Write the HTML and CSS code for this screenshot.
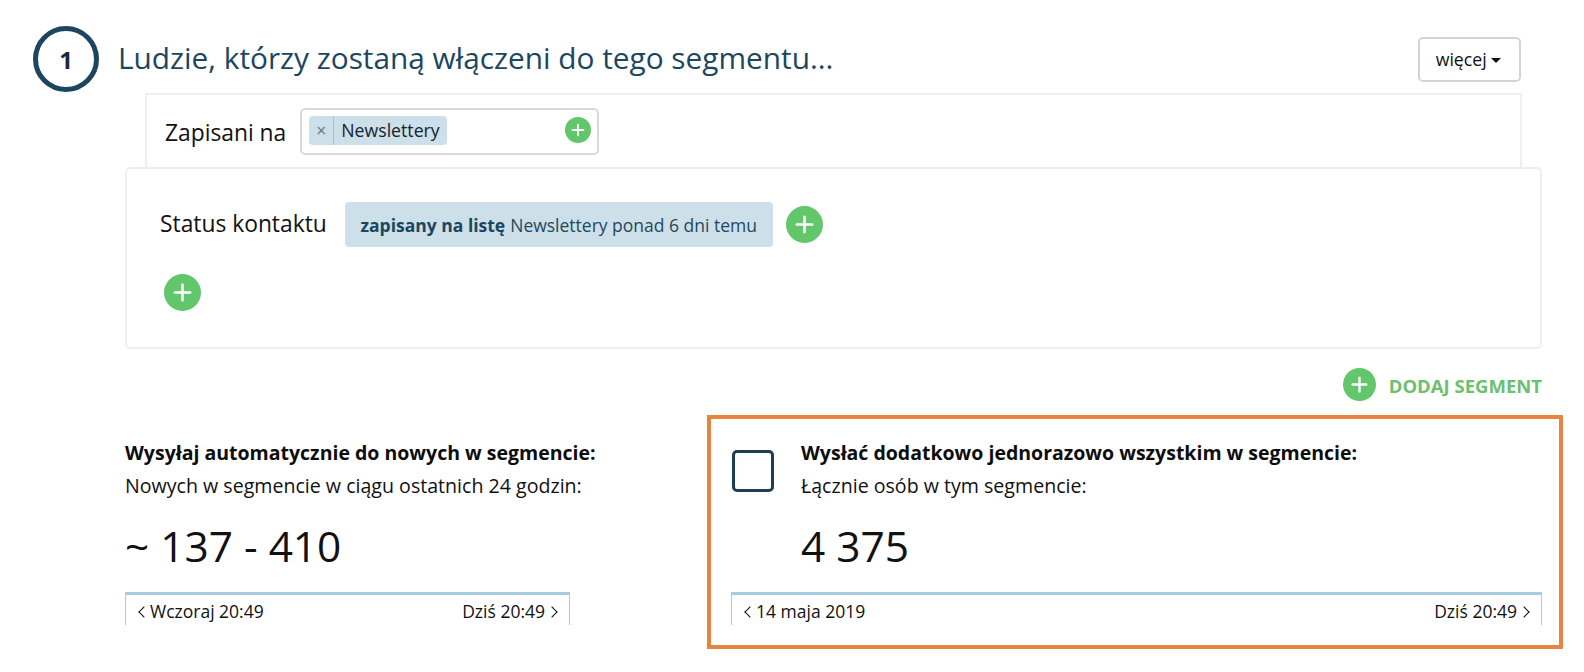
FILE: index.html
```html
<!DOCTYPE html>
<html lang="pl">
<head>
<meta charset="utf-8">
<title>Segment</title>
<link rel="stylesheet" href="styles.css">
</head>
<body>
<svg class="defs" width="0" height="0" aria-hidden="true"><symbol id="plus" viewBox="0 0 24 24"><circle cx="12" cy="12" r="12" fill="#62c66a"/><path d="M12 7v10M7 12h10" stroke="#fff" stroke-width="1.7" stroke-linecap="round"/></symbol></svg>
<main class="page">
  <header class="head">
    <div class="step">1</div>
    <h1 class="title">Ludzie, którzy zostaną włączeni do tego segmentu...</h1>
    <button class="more">więcej <span class="caret"></span></button>
  </header>
  <section class="subscribed">
    <span class="label">Zapisani na</span>
    <div class="tagbox">
      <span class="tag"><span class="tag-x">×</span><span class="tag-name">Newslettery</span></span>
      <svg class="plus-s"><use href="#plus"/></svg>
    </div>
  </section>
  <section class="conditions">
    <div class="cond-row">
      <span class="label">Status kontaktu</span>
      <span class="pill"><b>zapisany na listę</b> Newslettery ponad 6 dni temu</span>
      <svg class="plus-m"><use href="#plus"/></svg>
    </div>
    <svg class="plus-m plus-new"><use href="#plus"/></svg>
  </section>
  <div class="add-row">
    <svg class="plus-a"><use href="#plus"/></svg>
    <span class="add-text">DODAJ SEGMENT</span>
  </div>
  <div class="columns">
    <section class="col-left">
      <h2 class="h">Wysyłaj automatycznie do nowych w segmencie:</h2>
      <p class="sub">Nowych w segmencie w ciągu ostatnich 24 godzin:</p>
      <div class="num">~ 137 - 410</div>
      <div class="range"><span><i class="chev-l"></i>Wczoraj 20:49</span><span>Dziś 20:49<i class="chev-r"></i></span></div>
    </section>
    <section class="col-right">
      <div class="once">
        <div class="check"></div>
        <div>
          <h2 class="h">Wysłać dodatkowo jednorazowo wszystkim w segmencie:</h2>
          <p class="sub">Łącznie osób w tym segmencie:</p>
          <div class="num">4 375</div>
        </div>
      </div>
      <div class="range"><span><i class="chev-l"></i>14 maja 2019</span><span>Dziś 20:49<i class="chev-r"></i></span></div>
    </section>
  </div>
</main>
</body>
</html>
```
FILE: styles.css
```css
* { box-sizing: border-box; }
html, body { margin: 0; height: 100%; background: #fff; overflow: hidden; }
body { font-family: "Open Sans", "Liberation Sans", sans-serif; color: #111; }
.defs { position: absolute; }
.page { width: 1584px; height: 672px; padding-top: 26px; }

.head { display: flex; align-items: center; height: 66px; padding: 0 63px 0 33px; }
.step { width: 66px; height: 66px; border: 5px solid #1c4660; border-radius: 50%; display: flex; align-items: center; justify-content: center; font-size: 24px; font-weight: 700; color: #1a2b36; }
.title { margin: 0 0 4px 19px; font-size: 29.8px; font-weight: 400; color: #1c4660; white-space: nowrap; }
.more { margin: 0 0 0 auto; width: 103px; height: 45px; background: #fff; border: 2px solid #d4d4d4; border-radius: 5px; font: 400 17.7px "Open Sans", sans-serif; color: #111; padding: 0 2px 0 0; }
.caret { display: inline-block; width: 0; height: 0; border: 5px solid transparent; border-top-color: #111; border-bottom: 0; vertical-align: 3px; }

.label { font-size: 22.8px; color: #111; white-space: nowrap; }
.subscribed { display: flex; align-items: center; gap: 14px; height: 74px; margin: 1px 62px 0 145px; padding: 0 0 0 18px; border: 2px solid #efefef; border-bottom: 0; }
.subscribed .label { position: relative; top: 1px; }
.tagbox { width: 299px; height: 47px; border: 2px solid #d9d9d9; border-radius: 5px; display: flex; align-items: center; justify-content: space-between; padding: 0 6px 2px 7px; }
.tag { display: flex; align-items: center; height: 29px; background: #cddfe9; border-radius: 4px; font-size: 17.7px; color: #14232e; }
.tag-x { width: 25px; height: 100%; display: flex; align-items: center; justify-content: center; border-right: 1px solid #a9bfcc; color: #6b7a84; }
.tag-name { padding: 0 7px; }
.plus-s { width: 26px; height: 26px; }
.plus-m { width: 37px; height: 37px; display: block; }
.plus-a { width: 33px; height: 33px; display: block; }
.plus-new { margin-left: 4px; }

.conditions { margin: 0 42px 0 125px; height: 182px; border: 2px solid #efefef; border-radius: 5px; padding: 33px 0 0 33px; display: flex; flex-direction: column; gap: 27px; background: #fff; }
.cond-row { display: flex; align-items: center; }
.cond-row .label { padding-bottom: 2px; }
.pill { margin-left: 18px; height: 45px; width: 428px; background: #cddfe9; border-radius: 4px; display: flex; align-items: center; justify-content: center; gap: 5px; font-size: 17.5px; color: #24485e; white-space: nowrap; }
.pill b { color: #1c4660; }
.cond-row .plus-m { margin-left: 13px; }

.add-row { display: flex; align-items: center; justify-content: flex-end; gap: 13px; margin: 19px 42px 0 0; height: 33px; }
.add-text { font-size: 18.5px; font-weight: 700; color: #6cc070; padding-top: 2px; }

.columns { display: flex; align-items: flex-start; margin: 14px 0 0 125px; }
.col-left { width: 445px; padding-top: 24px; }
.col-right { width: 856px; height: 234px; margin-left: 137px; border: 4px solid #e5853f; padding: 20px 17px 0 20px; }
.once { display: flex; align-items: flex-start; gap: 27px; }
.check { width: 42px; height: 42px; margin: 11px 0 0 1px; border: 3px solid #1c3f55; border-radius: 5px; flex: none; }
.h { margin: 0; font-size: 19.5px; font-weight: 700; line-height: 28px; color: #0d0d0d; white-space: nowrap; }
.sub { margin: 5px 0 0; font-size: 19.6px; line-height: 28px; white-space: nowrap; }
.num { margin-top: 16px; font-size: 42.4px; line-height: 60px; white-space: nowrap; }
.range { display: flex; justify-content: space-between; height: 33px; margin-top: 16px; border: 1px solid #a9cbe2; border-top: 3px solid #a9cbe2; border-bottom: 0; padding: 0 13px 0 14px; font-size: 17.5px; line-height: 32px; white-space: nowrap; }
.chev-l, .chev-r { display: inline-block; width: 8px; height: 8px; border: solid #111; border-width: 0 0 1.5px 1.5px; transform: rotate(45deg); vertical-align: 2px; margin-right: 2px; }
.chev-r { transform: rotate(-135deg); margin: 0 0 0 3px; }
```
